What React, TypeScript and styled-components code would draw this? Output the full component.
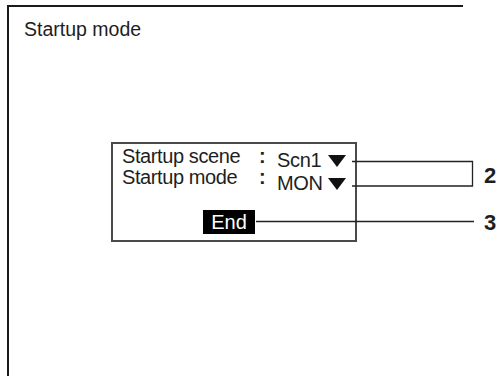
import styled, { createGlobalStyle } from 'styled-components'

const GlobalStyle = createGlobalStyle`
  html, body {
    margin: 0;
    padding: 0;
    background: #fff;
    font-family: "Liberation Sans", Arial, sans-serif;
    color: #1e1e1e;
  }
`

const settings = [
  { label: 'Startup scene', value: 'Scn1', shift: 4 },
  { label: 'Startup mode', value: 'MON', shift: 6 },
]

export default function App() {
  return (
    <Page>
      <GlobalStyle />
      <Screen>
        <Title>Startup mode</Title>
        <Dialog>
          <Settings>
            {settings.map((s) => (
              <Row key={s.label}>
                <Label>{s.label}</Label>
                <Colon>:</Colon>
                <Value $shift={s.shift}>
                  <ValueText>{s.value}</ValueText>
                  <Arrow viewBox="0 0 18 12" aria-hidden>
                    <polygon points="0,0 18,0 9,12" fill="#111" />
                  </Arrow>
                </Value>
              </Row>
            ))}
          </Settings>
          <EndButton type="button">End</EndButton>
        </Dialog>
      </Screen>
      <Leaders viewBox="0 0 500 376" aria-hidden>
        <path d="M352 161.5 H472.5 V186 H352" fill="none" stroke="#222" strokeWidth="1.3" />
        <path d="M256 221.5 H474" fill="none" stroke="#222" strokeWidth="1.3" />
      </Leaders>
      <Callout $top={164}>2</Callout>
      <Callout $top={211}>3</Callout>
    </Page>
  )
}

const Page = styled.div`
  position: relative;
  width: 500px;
  height: 376px;
  overflow: hidden;
`

const Screen = styled.div`
  box-sizing: border-box;
  margin: 5px 0 0 7px;
  width: 456px;
  height: 371px;
  padding: 11px 0 0 15px;
  border-top: 2px solid #1a1a1a;
  border-left: 2px solid #1a1a1a;
`

const Title = styled.div`
  font-size: 19.5px;
  line-height: 22px;
`

const Dialog = styled.div`
  box-sizing: border-box;
  margin: 102px 0 0 87px;
  width: 246px;
  height: 100px;
  padding: 2px 0 0 9px;
  border: 2px solid #4a4a4a;
`

const Settings = styled.div`
  display: flex;
  flex-direction: column;
`

const Row = styled.div`
  display: flex;
  align-items: flex-start;
  height: 21px;
`

const Label = styled.span`
  width: 137px;
  font-size: 20px;
  letter-spacing: -0.4px;
  line-height: 21px;
`

const Colon = styled.span`
  width: 18px;
  font-size: 20px;
  font-weight: 700;
  line-height: 21px;
`

const Value = styled.span<{ $shift: number }>`
  margin-top: ${({ $shift }) => $shift}px;
  font-size: 20px;
  line-height: 21px;
  white-space: nowrap;
`

const ValueText = styled.span`
  display: inline-block;
  width: 51px;
  letter-spacing: -0.3px;
`

const Arrow = styled.svg`
  width: 18px;
  height: 12px;
  vertical-align: baseline;
`

const EndButton = styled.button`
  display: block;
  margin: 22px 0 0 81px;
  width: 52px;
  height: 24px;
  padding: 0;
  border: none;
  background: #000;
  color: #fff;
  font-family: inherit;
  font-size: 20px;
  line-height: 24px;
`

const Leaders = styled.svg`
  position: absolute;
  left: 0;
  top: 0;
  width: 500px;
  height: 376px;
  pointer-events: none;
`

const Callout = styled.div<{ $top: number }>`
  position: absolute;
  left: 484px;
  top: ${({ $top }) => $top}px;
  font-size: 22px;
  font-weight: 700;
  line-height: 24px;
`
